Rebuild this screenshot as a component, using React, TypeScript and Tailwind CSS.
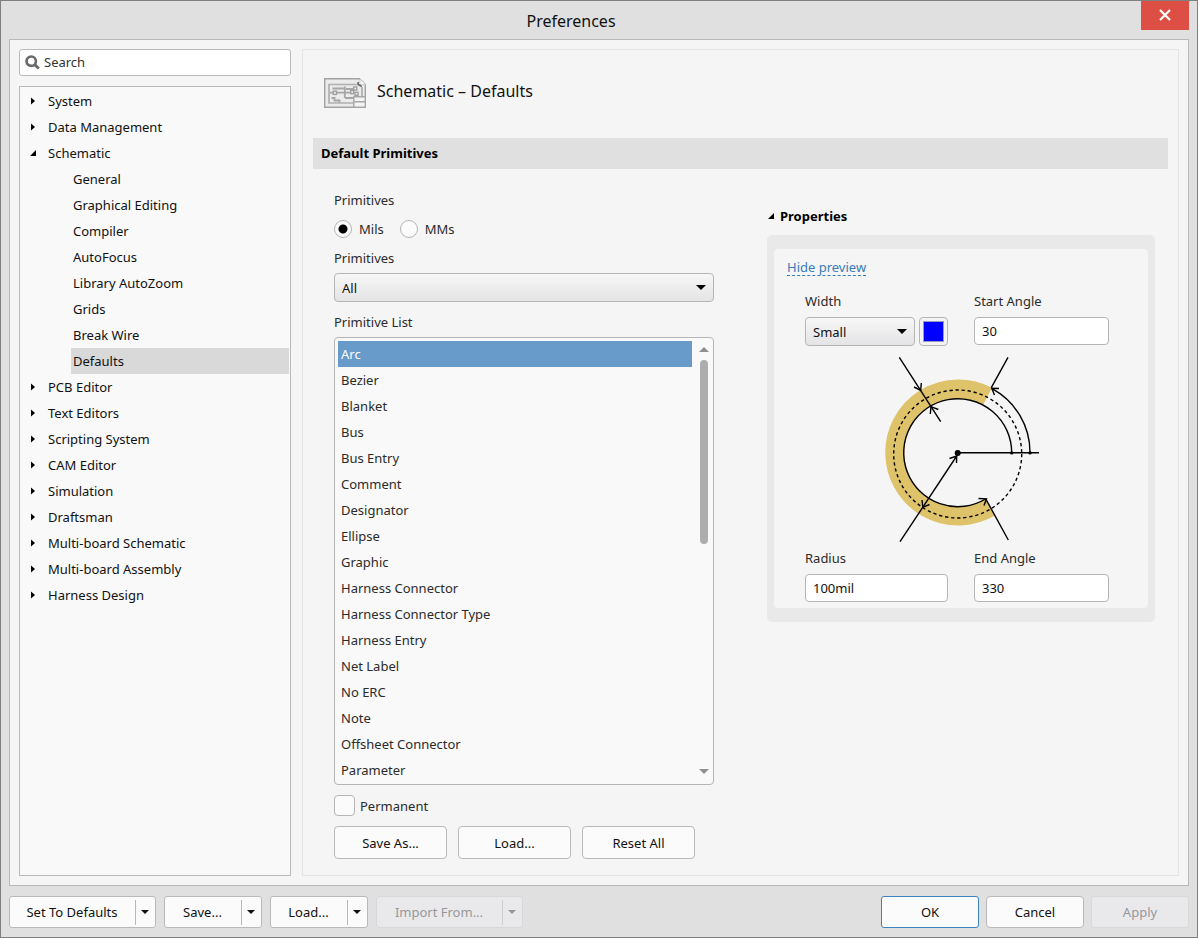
import { useState } from "react";
import type { ReactNode } from "react";

type TreeNode = { label: string; children?: string[] };

const TREE: TreeNode[] = [
  { label: "System" },
  { label: "Data Management" },
  {
    label: "Schematic",
    children: [
      "General",
      "Graphical Editing",
      "Compiler",
      "AutoFocus",
      "Library AutoZoom",
      "Grids",
      "Break Wire",
      "Defaults",
    ],
  },
  { label: "PCB Editor" },
  { label: "Text Editors" },
  { label: "Scripting System" },
  { label: "CAM Editor" },
  { label: "Simulation" },
  { label: "Draftsman" },
  { label: "Multi-board Schematic" },
  { label: "Multi-board Assembly" },
  { label: "Harness Design" },
];

const PRIMITIVES = [
  "Arc",
  "Bezier",
  "Blanket",
  "Bus",
  "Bus Entry",
  "Comment",
  "Designator",
  "Ellipse",
  "Graphic",
  "Harness Connector",
  "Harness Connector Type",
  "Harness Entry",
  "Net Label",
  "No ERC",
  "Note",
  "Offsheet Connector",
  "Parameter",
];

function Caret({ className = "" }: { className?: string }) {
  return (
    <svg viewBox="0 0 10 5" className={className} fill="currentColor" aria-hidden="true">
      <path d="M0 0h10L5 5z" />
    </svg>
  );
}

function Expander({ open }: { open?: boolean }) {
  return (
    <svg viewBox="0 0 8 8" className="size-2 shrink-0" fill="#000" aria-hidden="true">
      {open ? <path d="M7 1v6H1z" /> : <path d="M2 .5v7L6 4z" />}
    </svg>
  );
}

function SchematicIcon() {
  return (
    <svg viewBox="0 0 42 30" className="h-[30px] w-[42px] shrink-0" fill="none" aria-hidden="true">
      <path d="M.7.7h34.800l5.800 5.800v22.800H.7z" fill="#ebebeb" stroke="#a2a2a2" strokeWidth="1.400" />
      <path d="M36 1v5.500h5.500z" fill="#fafafa" stroke="#c4c4c4" strokeWidth=".8" />
      <path d="M34.200 4v2.500l3.600 2" stroke="#666" strokeWidth="1.700" />
      <path d="M33 6.500H5v18.500H30M38 9v9" stroke="#b0b0b0" strokeWidth="1.700" />
      <path
        d="M8.500 10.500H21M6 14.700h22M20.800 8.500V20M21 20h9M22 11h8M7.500 20h3v2.500h5v2"
        stroke="#a6a6a6"
        strokeWidth="1.800"
      />
      <g fill="#f2f2f2" stroke="#a0a0a0" strokeWidth="1.400">
        <rect x="9.300" y="13.200" width="3.200" height="3.200" />
        <rect x="29.700" y="9" width="3" height="3" />
        <rect x="26.700" y="12.600" width="3" height="3" />
        <rect x="31" y="14.300" width="3" height="3" />
      </g>
      <path d="M29.800 18.800h11.500v10.500H29.800zM29.800 23.800h11.500" fill="#f3f3f3" stroke="#a6a6a6" strokeWidth="1.400" />
    </svg>
  );
}

function ArcPreview() {
  return (
    <svg viewBox="805 346 304 202" className="col-span-2 h-[202px] w-[304px]" fill="none" role="img" aria-label="Arc preview">
      <path d="M987.600 396.200A63.500 63.500 0 1 0 990.200 507.400" stroke="#dfc36a" strokeWidth="19" />
      <g stroke="#000" strokeWidth="1.400">
        <circle cx="957.700" cy="454" r="64" strokeDasharray="3.300 2.800" />
        <path d="M1011.700 452.700A54 54 0 1 0 985.500 499" />
        <path d="M1030 452.700A72.300 72.300 0 0 0 992 388.700" />
        <path d="M899.300 357.300 940.700 421.700M1008 357.300 991.300 387.700M900 541.700 956.700 456M1008.300 540 986 499.300M957.700 452.700H1039" />
        <path d="M914 387 920.700 390.300 921.300 383" />
        <path d="M930.300 414 931 406.700 938.300 409.500" />
        <path d="M949.500 458.500 956.700 456 956.500 463" />
        <path d="M922 500 922.800 507.300 929.500 504.500" />
        <path d="M978.500 498.500 986.500 498.800 984 505.500" />
        <path d="M994.500 395 991.700 388.300 999 388.500" />
      </g>
      <g fill="#000">
        <circle cx="957.700" cy="453" r="3" />
        <circle cx="1011.700" cy="452.900" r="1.700" />
        <circle cx="1030" cy="452.900" r="1.700" />
      </g>
    </svg>
  );
}

function SplitButton({ label, width, disabled }: { label: string; width: string; disabled?: boolean }) {
  const tone = disabled
    ? "border-[#d8d8da] bg-[#e9e9eb] text-[#97979b]"
    : "border-[#b9b9b9] bg-[#fbfbfb] text-[#111]";
  return (
    <div className={`flex h-8 items-center rounded-[3px] border ${tone} ${width}`}>
      <button type="button" disabled={disabled} className="h-full flex-1 pr-px whitespace-nowrap">
        {label}
      </button>
      <span className={`h-[25px] w-px ${disabled ? "bg-[#d0d0d3]" : "bg-[#b9b9b9]"}`} />
      <button type="button" disabled={disabled} aria-label={`${label} options`} className="flex h-full w-[19px] items-center justify-center pr-px">
        <Caret className="h-1 w-2" />
      </button>
    </div>
  );
}

function PlainButton({ children, className = "" }: { children: ReactNode; className?: string }) {
  return (
    <button type="button" className={`rounded-[4px] border border-[#b9b9b9] bg-[#fbfbfb] text-[#111] ${className}`}>
      {children}
    </button>
  );
}

function Dropdown({ id, options, className = "" }: { id: string; options: string[]; className?: string }) {
  return (
    <div className={`grid items-center ${className}`}>
      <select
        id={id}
        className="col-start-1 row-start-1 h-[29px] w-full appearance-none rounded-[4px] border border-[#b5b5b5] bg-linear-to-b from-[#f7f7f7] to-[#e4e4e6] px-[7px] text-[#111]"
      >
        {options.map((o) => (
          <option key={o}>{o}</option>
        ))}
      </select>
      <Caret className="pointer-events-none col-start-1 row-start-1 mr-2 h-[5px] w-[10px] justify-self-end text-black" />
    </div>
  );
}

function Field({ id, value }: { id: string; value: string }) {
  return (
    <input
      id={id}
      type="text"
      defaultValue={value}
      className="h-7 w-full rounded-[4px] border border-[#b5b5b5] bg-white px-[7px] text-[#111]"
    />
  );
}

export default function App() {
  const [page, setPage] = useState("Defaults");
  const [selected, setSelected] = useState("Arc");
  const [preview, setPreview] = useState(true);

  return (
    <div className="flex min-h-screen flex-col border border-[#7f7f7f] bg-[#e0e0e0] font-['Noto_Sans','Open_Sans',sans-serif] text-[13px] leading-5 text-[#2b2b2b]">
      <header className="flex h-[38px] items-start pr-2">
        <h1 className="flex-1 pt-2 text-center text-base leading-6 text-[#111]">Preferences</h1>
        <button type="button" aria-label="Close" className="flex h-[29px] w-12 items-center justify-center bg-[#dd4f45] pb-[2px]">
          <svg viewBox="0 0 12 12" className="size-3" stroke="#fff" strokeWidth="2.200" aria-hidden="true">
            <path d="M1 1 11 11M11 1 1 11" />
          </svg>
        </button>
      </header>

      <main className="mx-2 flex flex-1 gap-[11px] border border-[#b9b9b9] bg-[#f5f5f5] p-[9px]">
        <aside className="flex w-[272px] shrink-0 flex-col gap-[10px]">
          <label className="flex h-[27px] items-center gap-1 rounded-[3px] border border-[#b9b9b9] bg-white px-[5px] pb-px">
            <svg viewBox="0 0 15 15" className="size-[15px] shrink-0" fill="none" stroke="#6a6a6a" aria-hidden="true">
              <circle cx="6.200" cy="6.200" r="4.700" strokeWidth="2.600" />
              <path d="M9.700 9.700 13.800 13.500" strokeWidth="3" />
            </svg>
            <input
              type="text"
              placeholder="Search"
              aria-label="Search"
              className="w-full bg-transparent outline-none placeholder:text-[#333]"
            />
          </label>
          <nav className="flex-1 border border-[#b9b9b9] bg-[#f9f9f9] p-px text-[#111]">
            <ul>
              {TREE.map((n) => (
                <li key={n.label}>
                  <button type="button" className="flex h-[26px] w-full items-center gap-[11px] pl-2 text-left">
                    <Expander open={!!n.children} />
                    {n.label}
                  </button>
                  {n.children && (
                    <ul className="pl-[50px]">
                      {n.children.map((c) => (
                        <li key={c}>
                          <button
                            type="button"
                            onClick={() => setPage(c)}
                            className={`block h-[26px] w-full pl-0.5 text-left ${c === page ? "bg-[#d9d9d9]" : ""}`}
                          >
                            {c}
                          </button>
                        </li>
                      ))}
                    </ul>
                  )}
                </li>
              ))}
            </ul>
          </nav>
        </aside>

        <section className="flex-1 border border-[#e4e4e4] px-[10px] pb-4">
          <div className="flex h-[88px] items-center gap-[11px] pb-[2px] pl-[11px]">
            <SchematicIcon />
            <h2 className="pb-1 text-base leading-6 text-[#111]">Schematic – Defaults</h2>
          </div>
          <h3 className="bg-[#e0e0e0] px-2 pt-[5px] pb-[6px] font-bold text-black">Default Primitives</h3>

          <div className="grid grid-cols-[380fr_388fr] items-start gap-[53px] pt-[21px] pr-[13px] pl-[21px]">
            <div>
              <fieldset>
                <legend>Primitives</legend>
                <div className="mt-[10px] flex h-[18px] items-center gap-4">
                  {["Mils", "MMs"].map((u) => (
                    <label key={u} className="flex items-center gap-[7px]">
                      <input
                        type="radio"
                        name="units"
                        defaultChecked={u === "Mils"}
                        className="size-[18px] appearance-none rounded-full border border-[#b5b5b5] bg-[#fbfbfb] bg-[radial-gradient(circle,#000_4px,transparent_5px)] not-checked:bg-none"
                      />
                      {u}
                    </label>
                  ))}
                </div>
              </fieldset>
              <label htmlFor="kind" className="mt-[10px] block">
                Primitives
              </label>
              <Dropdown id="kind" options={["All"]} className="mt-[5px]" />
              <div id="list-label" className="mt-[10px]">
                Primitive List
              </div>
              <div className="mt-[5px] flex rounded-[4px] border border-[#b5b5b5] bg-[#f9f9f9] pt-[3px] pb-px pl-[3px]">
                <div role="listbox" aria-labelledby="list-label" className="flex-1">
                  {PRIMITIVES.map((p) => (
                    <button
                      key={p}
                      type="button"
                      role="option"
                      aria-selected={p === selected}
                      onClick={() => setSelected(p)}
                      className={`block h-[26px] w-full pl-[3px] text-left ${p === selected ? "bg-[#689bca] text-white" : ""}`}
                    >
                      {p}
                    </button>
                  ))}
                </div>
                <div className="flex w-[21px] flex-col items-center pt-[6px] pr-px pb-[9px] pl-1 text-[#8f8f8f]" aria-hidden="true">
                  <Caret className="h-[5px] w-[10px] rotate-180" />
                  <div className="my-2 flex w-2 flex-1 flex-col">
                    <span className="h-[46%] rounded-full bg-[#adadad]" />
                  </div>
                  <Caret className="h-[5px] w-[10px]" />
                </div>
              </div>
              <label className="mt-[10px] flex w-fit items-center gap-[5px]">
                <input
                  type="checkbox"
                  className="size-[21px] appearance-none rounded-[4px] border border-[#b5b5b5] bg-[#fbfbfb] checked:bg-[#689bca]"
                />
                Permanent
              </label>
              <div className="mt-[10px] flex gap-[11px]">
                <PlainButton className="h-[33px] w-[113px]">Save As...</PlainButton>
                <PlainButton className="h-[33px] w-[113px]">Load...</PlainButton>
                <PlainButton className="h-[33px] w-[113px]">Reset All</PlainButton>
              </div>
            </div>

            <div className="pt-4">
              <h4 className="flex items-center gap-[5px] font-bold text-black">
                <Expander open />
                Properties
              </h4>
              <div className="mt-[9px] rounded-[5px] bg-[#e9e9e9] px-[7px] py-[14px]">
                <div className="rounded-[4px] bg-[#f5f5f5] px-[13px] pt-[10px] pb-[6px]">
                  <button
                    type="button"
                    onClick={() => setPreview(!preview)}
                    className="block border-b border-dashed border-[#3a7cb8] leading-4 text-[#3a7cb8]"
                  >
                    {preview ? "Hide preview" : "Show preview"}
                  </button>
                  <div className="grid grid-cols-[143px_135px] gap-x-[26px] pt-[15px] pl-[18px]">
                    <div className="flex flex-col gap-[6px]">
                      <label htmlFor="width">Width</label>
                      <div className="flex gap-1">
                        <Dropdown id="width" options={["Small", "Smallest", "Medium", "Large"]} className="w-[110px]" />
                        <button
                          type="button"
                          aria-label="Color"
                          className="flex size-[29px] items-center justify-center rounded-[4px] border border-[#b5b5b5] bg-[#f3f3f4]"
                        >
                          <span className="size-[21px] border border-[#9a9ac0] bg-[#0000ff]" />
                        </button>
                      </div>
                    </div>
                    <div className="flex flex-col gap-[6px]">
                      <label htmlFor="start">Start Angle</label>
                      <Field id="start" value="30" />
                    </div>
                    {preview && <ArcPreview />}
                    <div className="flex flex-col gap-[6px]">
                      <label htmlFor="radius">Radius</label>
                      <Field id="radius" value="100mil" />
                    </div>
                    <div className="flex flex-col gap-[6px]">
                      <label htmlFor="end">End Angle</label>
                      <Field id="end" value="330" />
                    </div>
                  </div>
                </div>
              </div>
            </div>
          </div>
        </section>
      </main>

      <footer className="flex items-center gap-2 px-2 pt-[10px] pb-[9px]">
        <SplitButton label="Set To Defaults" width="w-[147px]" />
        <SplitButton label="Save..." width="w-[98px]" />
        <SplitButton label="Load..." width="w-[98px]" />
        <SplitButton label="Import From..." width="w-[147px]" disabled />
        <div className="ml-auto flex gap-[7px]">
          <button type="button" className="h-8 w-[98px] rounded-[3px] border border-[#3c83c0] bg-[#fbfbfb] text-[#111]">
            OK
          </button>
          <PlainButton className="h-8 w-[98px]">Cancel</PlainButton>
          <button type="button" disabled className="h-8 w-[98px] rounded-[3px] border border-[#d8d8da] bg-[#e9e9eb] text-[#97979b]">
            Apply
          </button>
        </div>
      </footer>
    </div>
  );
}
